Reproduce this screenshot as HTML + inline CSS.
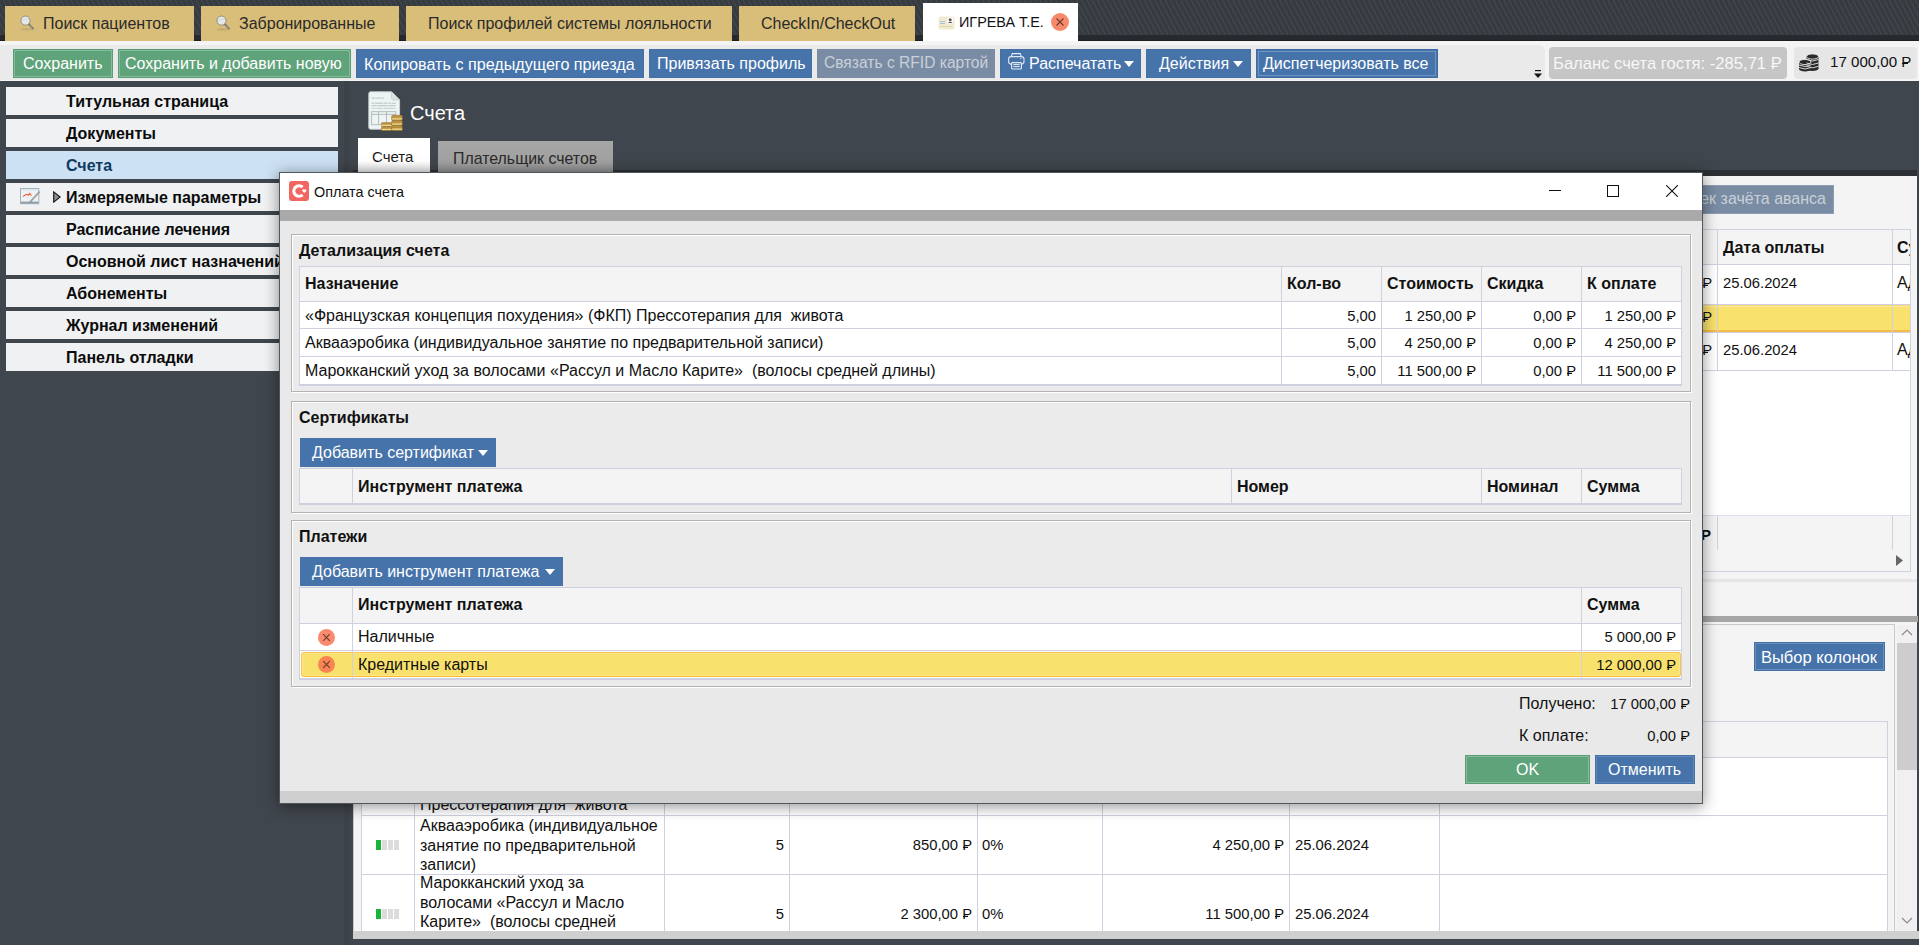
<!DOCTYPE html>
<html><head><meta charset="utf-8">
<style>
*{box-sizing:border-box;margin:0;padding:0}
html,body{width:1919px;height:945px;overflow:hidden}
body{background:#40464d;font-family:"Liberation Sans",sans-serif;font-size:16px;color:#111;position:relative}
.a{position:absolute}
.t{position:absolute;white-space:pre;line-height:1}
.r{position:relative;display:inline-block}
.r::after{content:"";position:absolute;left:0.03em;width:0.4em;top:0.6em;height:0.08em;min-height:1px;background:currentColor}
/* top bar */
#topbar{left:0;top:0;width:1919px;height:41px;background:repeating-linear-gradient(62deg,#363b40 0 2.9px,#43484f 3.5px 4px,#363b40 4.6px)}
#topbar .bot{left:0;top:35px;width:1919px;height:6px;background:#262a2e;border-bottom:1px solid #1c1f22}
.tab{position:absolute;top:6px;height:35px;background:#d9be79;color:#2a2a2a}
.mag{position:absolute;width:16px;height:16px;overflow:visible}
/* toolbar */
#toolbar{left:0;top:41px;width:1919px;height:40px;background:#f4f4f4}
.btn{position:absolute;top:49px;height:29px;color:#fff;font-size:16px}
.g{background:#5fa37b;border:1px solid #5a9c74;box-shadow:inset 0 0 0 1px #86bb9b}
.b{background:#4673aa;border:1px solid #4470a6}
.dis{background:#7a8ca3;color:#c9d0da}
/* nav */
.nav{position:absolute;left:6px;width:332px;height:28px;background:#f0f1f3;font-weight:700;font-size:16px;color:#0b0b0b}
.nav.sel{background:#cce1f4;color:#0f3a60}

.grp{border:1px solid #b3b3b3;box-shadow:inset 1px 1px 0 #fff, 1px 1px 0 #fff;background:#ebebeb}
.hl{left:300px;width:1381px;height:1px;background:#cfd1e0}
.vl{width:1px;background:#cfd1e0}
.hd{font-weight:700;font-size:16px}
</style></head><body>

<!-- TOP TAB BAR -->
<div class="a" id="topbar"><div class="a bot"></div>
  <div class="tab" style="left:5px;width:189px">
    <svg class="mag" style="left:15px;top:10px" viewBox="0 0 16 16"><ellipse cx="6.5" cy="13.3" rx="6" ry="1.2" fill="#b9a06a" opacity="0.6"/><path d="M8.9 8.3L13 12.6" stroke="#7c776c" stroke-width="2" stroke-linecap="round"/><path d="M9.3 8.9L12.7 12.3" stroke="#c9c9c9" stroke-width="0.7" stroke-dasharray="0.8 0.6"/><circle cx="5.5" cy="4.6" r="4.6" fill="#e4e9e8" stroke="#8a8576" stroke-width="0.9"/><path d="M2.2 4.4Q5 2.6 8.8 3.3" stroke="#c5d2d6" stroke-width="0.8" fill="none"/></svg>
    <span class="t" style="left:38px;top:10px;font-size:16px">Поиск пациентов</span></div>
  <div class="tab" style="left:201px;width:198px">
    <svg class="mag" style="left:15px;top:10px" viewBox="0 0 16 16"><ellipse cx="6.5" cy="13.3" rx="6" ry="1.2" fill="#b9a06a" opacity="0.6"/><path d="M8.9 8.3L13 12.6" stroke="#7c776c" stroke-width="2" stroke-linecap="round"/><path d="M9.3 8.9L12.7 12.3" stroke="#c9c9c9" stroke-width="0.7" stroke-dasharray="0.8 0.6"/><circle cx="5.5" cy="4.6" r="4.6" fill="#e4e9e8" stroke="#8a8576" stroke-width="0.9"/><path d="M2.2 4.4Q5 2.6 8.8 3.3" stroke="#c5d2d6" stroke-width="0.8" fill="none"/></svg>
    <span class="t" style="left:38px;top:10px;font-size:16px">Забронированные</span></div>
  <div class="tab" style="left:406px;width:326px">
    <span class="t" style="left:22px;top:10px;font-size:16px">Поиск профилей системы лояльности</span></div>
  <div class="tab" style="left:739px;width:176px">
    <span class="t" style="left:22px;top:10px;font-size:16px">CheckIn/CheckOut</span></div>
  <div class="a" style="left:923px;top:3px;width:155px;height:38px;background:#fff">
    <svg class="a" style="left:15px;top:13px" width="17" height="14" viewBox="0 0 17 14"><rect x="0.5" y="0.5" width="16" height="13" rx="2" fill="#f3ead2"/><rect x="2" y="5" width="5" height="1" fill="#9ec3d6"/><rect x="2" y="7" width="5" height="1" fill="#9ec3d6"/><rect x="2" y="10" width="12" height="1" fill="#e0d3b0"/><rect x="9.5" y="1.5" width="5.5" height="6" fill="#fff"/><circle cx="12.2" cy="3.8" r="1.5" fill="#555"/><path d="M10 7 Q12.2 4.5 14.5 7Z" fill="#555"/></svg>
    <span class="t" style="left:36px;top:12px;font-size:14.4px;color:#111">ИГРЕВА Т.Е.</span>
    <svg class="a" style="left:128px;top:10px" width="18" height="18" viewBox="0 0 18 18"><circle cx="9" cy="9" r="9" fill="#f9896b"/><path d="M5.5 5.5L12.5 12.5M12.5 5.5L5.5 12.5" stroke="#6b3b30" stroke-width="1.1"/></svg>
  </div>
</div>

<!-- TOOLBAR -->
<div class="a" id="toolbar"></div>
<div class="a" style="left:0;top:45px;width:1545px;height:35px;background:#eaeaea;border-top-right-radius:6px"></div>
<div class="btn g" style="left:13px;width:100px"><span class="t" style="left:9px;top:6px">Сохранить</span></div>
<div class="btn g" style="left:118px;width:233px"><span class="t" style="left:6px;top:6px">Сохранить и добавить новую</span></div>
<div class="btn b" style="left:356px;width:288px"><span class="t" style="left:7px;top:6px;font-size:16.15px">Копировать с предыдущего приезда</span></div>
<div class="btn b" style="left:649px;width:163px"><span class="t" style="left:7px;top:6px">Привязать профиль</span></div>
<div class="btn dis" style="left:817px;width:178px"><span class="t" style="left:7px;top:6px;font-size:15.6px">Связать с RFID картой</span></div>
<div class="btn b" style="left:1000px;width:141px">
  <svg class="a" style="left:7px;top:3px" width="17" height="17" viewBox="0 0 17 17"><path d="M3.3 3.6L4.3 0.6H12.3L13.3 3.6" fill="none" stroke="#e8edf5" stroke-width="1.1"/><rect x="0.6" y="3.6" width="15.4" height="7.6" rx="2.6" fill="none" stroke="#dde5ef" stroke-width="1.1"/><rect x="3.6" y="9.6" width="9.8" height="6.4" rx="0.8" fill="#4673aa" stroke="#e8edf5" stroke-width="1.1"/><path d="M5.3 11.6h6.4M5.3 13.6h6.4" stroke="#e8edf5" stroke-width="1"/><circle cx="13" cy="5.6" r="0.6" fill="#e8edf5"/></svg>
  <span class="t" style="left:28px;top:6px">Распечатать</span>
  <svg class="a" style="left:123px;top:11px" width="10" height="6" viewBox="0 0 10 6"><path d="M0 0H10L5 6Z" fill="#fff"/></svg></div>
<div class="btn b" style="left:1146px;width:105px"><span class="t" style="left:12px;top:6px">Действия</span>
  <svg class="a" style="left:86px;top:11px" width="10" height="6" viewBox="0 0 10 6"><path d="M0 0H10L5 6Z" fill="#fff"/></svg></div>
<div class="btn b" style="left:1256px;width:182px;border-color:#3e6ba4;box-shadow:inset 0 0 0 1px #4875ad,inset 0 0 0 2px #6e94c2"><span class="t" style="left:6px;top:6px">Диспетчеризовать все</span></div>
<svg class="a" style="left:1534px;top:70px" width="8" height="8" viewBox="0 0 8 8"><rect x="1" y="0" width="6" height="1.2" fill="#111"/><path d="M0 3.5H8L4 8Z" fill="#111"/></svg>
<div class="a" style="left:1549px;top:47px;width:238px;height:32px;background:#c6c6c6;border-radius:4px"><span class="t" style="left:4px;top:9px;font-size:16.6px;color:#f7f7f7">Баланс счета гостя: -285,71 <span class="r">Р</span></span></div>
<div class="a" style="left:1794px;top:47px;width:123px;height:32px;background:#e6e6e6;border-radius:4px">
  <svg class="a" style="left:4px;top:6px" width="22" height="20" viewBox="0 0 22 20"><g fill="#2b2b2b"><ellipse cx="14.5" cy="3.5" rx="6" ry="2.6"/><rect x="8.5" y="3.5" width="12" height="12"/><ellipse cx="14.5" cy="15.5" rx="6" ry="2.6"/><ellipse cx="7" cy="9" rx="6" ry="2.6"/><rect x="1" y="9" width="12" height="7"/><ellipse cx="7" cy="16" rx="6" ry="2.6"/></g><g stroke="#e6e6e6" stroke-width="0.9" fill="none"><path d="M8.5 6.5Q14.5 9.5 20.5 6.5M8.5 10Q14.5 13 20.5 10M8.5 13.3Q14.5 16.3 20.5 13.3M1 12Q7 15 13 12M1 14.5Q7 17.5 13 14.5"/><ellipse cx="14.5" cy="3.5" rx="6" ry="2.6"/><ellipse cx="7" cy="9" rx="6" ry="2.6"/></g></svg>
  <span class="t" style="left:36px;top:7px;font-size:15.1px;color:#111">17 000,00 <span class="r">Р</span></span></div>

<!-- LEFT NAV -->
<div class="nav" style="top:87px"><span class="t" style="left:60px;top:7px">Титульная страница</span></div>
<div class="nav" style="top:119px"><span class="t" style="left:60px;top:7px">Документы</span></div>
<div class="nav sel" style="top:151px"><span class="t" style="left:60px;top:7px">Счета</span></div>
<div class="nav" style="top:183px">
  <svg class="a" style="left:14px;top:5px" width="21" height="17" viewBox="0 0 21 17"><rect x="0.5" y="0.5" width="18.3" height="15.2" fill="#eef2f4" stroke="#a3b3bb"/><rect x="1" y="1" width="17.3" height="1.4" fill="#d7e6ee"/><rect x="1" y="13.6" width="17.3" height="2" fill="#8fa0a9"/><path d="M3 8.6L4.8 7.2L6.6 6.3L8.2 7.2L9.8 5.4L11.4 7.8" stroke="#f2603f" stroke-width="1.1" fill="none"/><path d="M9.8 14.2L19.6 3.6" stroke="#8d9aa1" stroke-width="1.7"/><path d="M10.2 13.2L18.8 3.9" stroke="#e8b8b8" stroke-width="0.6"/></svg>
  <svg class="a" style="left:47px;top:8px" width="8" height="12" viewBox="0 0 8 12"><path d="M0.7 0.9L7.2 6L0.7 11.1Z" fill="#8c8c8c" stroke="#111" stroke-width="1.1" stroke-linejoin="miter"/></svg>
  <span class="t" style="left:60px;top:7px">Измеряемые параметры</span></div>
<div class="nav" style="top:215px"><span class="t" style="left:60px;top:7px">Расписание лечения</span></div>
<div class="nav" style="top:247px"><span class="t" style="left:60px;top:7px">Основной лист назначений</span></div>
<div class="nav" style="top:279px"><span class="t" style="left:60px;top:7px">Абонементы</span></div>
<div class="nav" style="top:311px"><span class="t" style="left:60px;top:7px">Журнал изменений</span></div>
<div class="nav" style="top:343px"><span class="t" style="left:60px;top:7px">Панель отладки</span></div>


<!-- CONTENT -->
<div class="a" style="left:344px;top:81px;width:6px;height:864px;background:#3d4248"></div>
<svg class="a" style="left:367px;top:91px" width="36" height="40" viewBox="0 0 36 40">
  <defs><linearGradient id="cg" x1="0" y1="0" x2="0" y2="1"><stop offset="0" stop-color="#c79f4b"/><stop offset="0.35" stop-color="#b48a3a"/><stop offset="0.7" stop-color="#f1d98c"/><stop offset="1" stop-color="#a37c33"/></linearGradient></defs>
  <path d="M3.5 0.8H24.5L32.6 8.9V36.6Q32.6 38.2 31 38.2H3.5Q1.8 38.2 1.8 36.6V2.5Q1.8 0.8 3.5 0.8Z" fill="#eef3f3" stroke="#cdd6d6" stroke-width="0.9"/>
  <path d="M24.5 0.8V7.2Q24.5 9 26.3 9H32.6Z" fill="#dbe4e4" stroke="#c2cccc" stroke-width="0.7"/>
  <g fill="#b9c0c0"><rect x="4.6" y="6.6" width="4" height="1"/><rect x="9.2" y="6.6" width="4.5" height="1"/><rect x="14.3" y="6.6" width="2.5" height="1"/>
  <rect x="4.6" y="11.7" width="2.5" height="1"/><rect x="7.8" y="11.7" width="8" height="1"/><rect x="16.5" y="11.7" width="4" height="1"/><rect x="21.3" y="11.7" width="3" height="1"/><rect x="25.2" y="11.7" width="3.5" height="1"/>
  <rect x="4.6" y="14.2" width="5" height="1"/><rect x="10.3" y="14.2" width="11" height="1"/><rect x="22" y="14.2" width="6.7" height="1"/>
  <rect x="4.6" y="16.8" width="4" height="1" opacity="0.7"/><rect x="9.3" y="16.8" width="7" height="1" opacity="0.7"/><rect x="17" y="16.8" width="11.5" height="1" opacity="0.7"/></g>
  <g fill="none" stroke="#aeb7b7" stroke-width="0.9"><rect x="4.6" y="20.7" width="24.2" height="13"/><path d="M4.6 23.4H28.8M11.6 20.7V33.7M19.5 20.7V33.7"/></g>
  <g stroke="#8e6a28" stroke-width="0.5" fill="url(#cg)"><rect x="24.6" y="24.3" width="10.7" height="5.2" rx="1.2"/><rect x="24.6" y="29.5" width="10.7" height="5.2" rx="1.2"/><rect x="24.6" y="34.7" width="10.7" height="5.1" rx="1.2"/><rect x="14.4" y="31.6" width="10.2" height="4.1" rx="1.1"/><rect x="14.4" y="35.7" width="10.2" height="4.1" rx="1.1"/></g>
</svg>
<span class="t" style="left:410px;top:102.5px;font-size:20px;color:#fff">Счета</span>
<div class="a" style="left:353px;top:170px;width:1564px;height:6px;background:#2c3035"></div>
<div class="a" style="left:358px;top:138px;width:72px;height:34px;background:linear-gradient(#fff 0,#fff 70%,#e4e4e4 100%)"><span class="t" style="left:14px;top:11px;font-size:15px;color:#1a1a1a">Счета</span></div>
<div class="a" style="left:438px;top:141px;width:175px;height:31px;background:linear-gradient(#a6a6a6 0,#a0a0a0 70%,#8c8c8c 100%)"><span class="t" style="left:15px;top:10px;font-size:15.9px;color:#2a2a2a">Плательщик счетов</span></div>
<div class="a" style="left:353px;top:176px;width:1564px;height:755px;background:#f4f4f4"></div>
<div class="a" style="left:353px;top:931px;width:1566px;height:8px;background:#cfcfcf"></div>

<!-- upper panel right visible part -->
<div class="btn dis" style="left:1560px;top:185px;width:274px;height:29px;box-shadow:inset 0 0 0 1px #8c9db3"><span class="t" style="right:8px;top:6px">Чек зачёта аванса</span></div>
<div class="a" style="left:1560px;top:229px;width:351px;height:343px;background:#fff;border:1px solid #cfd1e0;overflow:hidden">
 <div class="a" style="left:0;top:0;width:349px;height:35px;background:#f4f4f4;border-bottom:1px solid #cfd1e0"></div>
 <span class="t" style="left:162px;top:10px;font-weight:700;font-size:16px">Дата оплаты</span>
 <span class="t" style="left:336px;top:10px;font-weight:700;font-size:16px">Сумма</span>
 <div class="a" style="left:0;top:74px;width:349px;height:1px;background:#cfd1e0"></div>
 <div class="a" style="left:0;top:75px;width:349px;height:27px;background:#f9e16d;border-top:1px solid #fbd77a;border-bottom:2px solid #f5bd45;box-shadow:inset 0 1px 0 #fde9a0"></div>
 <div class="a" style="left:0;top:102px;width:349px;height:1px;background:#cfd1e0"></div>
 <div class="a" style="left:0;top:140px;width:349px;height:1px;background:#cfd1e0"></div>
 <div class="a" style="left:156px;top:0;width:1px;height:141px;background:#cfd1e0"></div>
 <div class="a" style="left:331px;top:0;width:1px;height:141px;background:#cfd1e0"></div>
 <span class="t" style="right:198px;top:46px;font-size:14.8px">250,00 <span class="r">Р</span></span>
 <span class="t" style="right:198px;top:80px;font-size:14.8px">250,00 <span class="r">Р</span></span>
 <span class="t" style="right:198px;top:113px;font-size:14.8px">250,00 <span class="r">Р</span></span>
 <span class="t" style="left:162px;top:46px;font-size:14.8px">25.06.2024</span>
 <span class="t" style="left:162px;top:113px;font-size:14.8px">25.06.2024</span>
 <span class="t" style="left:336px;top:45px;font-size:16px">Ад</span>
 <span class="t" style="left:336px;top:112px;font-size:16px">Ад</span>
 <div class="a" style="left:0;top:285px;width:349px;height:56px;background:#f4f4f4;border-top:1px solid #dcdde8"></div>
 <div class="a" style="left:156px;top:286px;width:1px;height:34px;background:#cfd1e0"></div>
 <div class="a" style="left:331px;top:286px;width:1px;height:34px;background:#cfd1e0"></div>
 <span class="t" style="right:199px;top:297px;font-size:15px;font-weight:700">17 000,00 <span class="r">Р</span></span>
 <svg class="a" style="left:335px;top:325px" width="7" height="11" viewBox="0 0 7 11"><path d="M0 0L7 5.5L0 11Z" fill="#666"/></svg>
</div>
<div class="a" style="left:353px;top:579px;width:1564px;height:3px;background:#e6e6e6"></div>
<div class="a" style="left:353px;top:616px;width:1565px;height:6px;background:#a6a6a6"></div>

<!-- lower panel -->
<div class="a" style="left:353px;top:624px;width:1542px;height:307px;border:1px solid #c9c9c9;border-bottom:none;background:#f4f4f4"></div>
<div class="btn b" style="left:1754px;top:642px;width:131px;box-shadow:inset 0 0 0 1px #6a8fbf"><span class="t" style="left:6px;top:6px;font-size:16.5px">Выбор колонок</span></div>
<div class="a" style="left:1897px;top:625px;width:20px;height:306px;background:#f0f0f0"></div>
<div class="a" style="left:1897px;top:643px;width:20px;height:127px;background:#cdcdcd"></div>
<svg class="a" style="left:1901px;top:628px" width="12" height="8" viewBox="0 0 12 8"><path d="M1 7L6 2L11 7" stroke="#8a8a8a" stroke-width="1.2" fill="none"/></svg>
<svg class="a" style="left:1901px;top:917px" width="12" height="8" viewBox="0 0 12 8"><path d="M1 1L6 6L11 1" stroke="#8a8a8a" stroke-width="1.2" fill="none"/></svg>
<div class="a" style="left:361px;top:721px;width:1527px;height:210px;background:#fff;border:1px solid #cfd1e0;border-bottom:none"></div>
<div class="a" style="left:362px;top:722px;width:1525px;height:36px;background:#f4f4f4;border-bottom:1px solid #cfd1e0"></div>
<div class="a" style="left:362px;top:815px;width:1525px;height:1px;background:#cfd1e0"></div>
<div class="a" style="left:362px;top:874px;width:1525px;height:1px;background:#cfd1e0"></div>
<div class="a" style="left:414px;top:722px;width:1px;height:209px;background:#cfd1e0"></div>
<div class="a" style="left:664px;top:722px;width:1px;height:209px;background:#cfd1e0"></div>
<div class="a" style="left:789px;top:722px;width:1px;height:209px;background:#cfd1e0"></div>
<div class="a" style="left:977px;top:722px;width:1px;height:209px;background:#cfd1e0"></div>
<div class="a" style="left:1102px;top:722px;width:1px;height:209px;background:#cfd1e0"></div>
<div class="a" style="left:1289px;top:722px;width:1px;height:209px;background:#cfd1e0"></div>
<div class="a" style="left:1439px;top:722px;width:1px;height:209px;background:#cfd1e0"></div>
<div class="a" style="left:420px;top:757px;width:240px;height:58px;overflow:hidden;font-size:16px;line-height:19.5px;color:#111"><div class="a" style="left:0;top:-1px;width:240px;white-space:pre-wrap">«Французская концепция похудения» (ФКП) Прессотерапия для  живота</div></div>
<div class="a" style="left:420px;top:816px;width:240px;height:58px;font-size:16px;line-height:19.5px;color:#111"><div class="a" style="left:0;top:0;white-space:pre">Аквааэробика (индивидуальное
занятие по предварительной
записи)</div></div>
<div class="a" style="left:420px;top:875px;width:240px;height:56px;overflow:hidden;font-size:16px;line-height:19.5px;color:#111"><div class="a" style="left:0;top:-2px;white-space:pre">Марокканский уход за
волосами «Рассул и Масло
Карите»  (волосы средней
длины)</div></div>
<span class="t" style="right:1135px;top:838px;font-size:14.8px">5</span>
<span class="t" style="right:947px;top:838px;font-size:14.8px">850,00 <span class="r">Р</span></span>
<span class="t" style="left:982px;top:838px;font-size:14.8px">0%</span>
<span class="t" style="right:635px;top:838px;font-size:14.8px">4 250,00 <span class="r">Р</span></span>
<span class="t" style="left:1295px;top:838px;font-size:14.8px">25.06.2024</span>
<span class="t" style="right:1135px;top:907px;font-size:14.8px">5</span>
<span class="t" style="right:947px;top:907px;font-size:14.8px">2 300,00 <span class="r">Р</span></span>
<span class="t" style="left:982px;top:907px;font-size:14.8px">0%</span>
<span class="t" style="right:635px;top:907px;font-size:14.8px">11 500,00 <span class="r">Р</span></span>
<span class="t" style="left:1295px;top:907px;font-size:14.8px">25.06.2024</span>
<svg class="a" style="left:376px;top:840px" width="24" height="10" viewBox="0 0 24 10"><rect x="0" y="0" width="5" height="10" fill="#1bb43a"/><rect x="6" y="0" width="5" height="10" fill="#dcdcdc"/><rect x="12" y="0" width="5" height="10" fill="#dcdcdc"/><rect x="18" y="0" width="5" height="10" fill="#dcdcdc"/></svg>
<svg class="a" style="left:376px;top:909px" width="24" height="10" viewBox="0 0 24 10"><rect x="0" y="0" width="5" height="10" fill="#1bb43a"/><rect x="6" y="0" width="5" height="10" fill="#dcdcdc"/><rect x="12" y="0" width="5" height="10" fill="#dcdcdc"/><rect x="18" y="0" width="5" height="10" fill="#dcdcdc"/></svg>



<!-- DIALOG -->
<div class="a" id="dlg" style="left:279px;top:172px;width:1424px;height:632px;background:#e9e9e9;border:1px solid #4e565e;box-shadow:0 2px 14px rgba(0,0,0,0.45)">
</div>
<div class="a" style="left:280px;top:173px;width:1422px;height:37px;background:#fff"></div>
<svg class="a" style="left:289px;top:181px" width="20" height="20" viewBox="0 0 20 20"><rect x="0" y="0" width="20" height="20" rx="3" fill="#f26661"/><path d="M13.6 6.2A5.2 5.2 0 1 0 13.6 13.8" stroke="#fff" stroke-width="3.2" fill="none"/><path d="M13 9.3q1-1.6 2.3-0.6q1.3-1 2.3 0.6q-0.5 1.3-2.3 2.6q-1.8-1.3-2.3-2.6z" fill="#fff"/></svg>
<span class="t" style="left:314px;top:185px;font-size:14.4px;color:#111">Оплата счета</span>
<div class="a" style="left:1549px;top:190px;width:12px;height:1px;background:#111"></div>
<div class="a" style="left:1607px;top:185px;width:12px;height:12px;border:1px solid #111"></div>
<svg class="a" style="left:1666px;top:185px" width="12" height="12" viewBox="0 0 12 12"><path d="M0 0L12 12M12 0L0 12" stroke="#111" stroke-width="1.1"/></svg>
<div class="a" style="left:280px;top:210px;width:1422px;height:11px;background:#a9a9a9"></div>
<div class="a" style="left:280px;top:791px;width:1422px;height:12px;background:#cfcfcf"></div>

<!-- group 1 -->
<div class="a grp" style="left:291px;top:234px;width:1400px;height:158px"></div>
<span class="t" style="left:299px;top:243px;font-weight:700;font-size:16px">Детализация счета</span>
<div class="a" style="left:299px;top:266px;width:1383px;height:120px;background:#fff;border:1px solid #cfd1e0;border-bottom-width:2px"></div>
<div class="a" style="left:300px;top:267px;width:1381px;height:35px;background:#f4f4f4;border-bottom:1px solid #cfd1e0"></div>
<div class="a hl" style="top:328px"></div>
<div class="a hl" style="top:356px"></div>
<div class="a vl" style="left:1281px;top:267px;height:118px"></div>
<div class="a vl" style="left:1381px;top:267px;height:118px"></div>
<div class="a vl" style="left:1481px;top:267px;height:118px"></div>
<div class="a vl" style="left:1581px;top:267px;height:118px"></div>
<span class="t hd" style="left:305px;top:276px">Назначение</span>
<span class="t hd" style="left:1287px;top:276px">Кол-во</span>
<span class="t hd" style="left:1387px;top:276px">Стоимость</span>
<span class="t hd" style="left:1487px;top:276px">Скидка</span>
<span class="t hd" style="left:1587px;top:276px">К оплате</span>
<span class="t" style="left:305px;top:308px">«Французская концепция похудения» (ФКП) Прессотерапия для  живота</span>
<span class="t" style="left:305px;top:335px">Аквааэробика (индивидуальное занятие по предварительной записи)</span>
<span class="t" style="left:305px;top:363px">Марокканский уход за волосами «Рассул и Масло Карите»  (волосы средней длины)</span>
<span class="t" style="right:543px;top:309px;font-size:14.8px">5,00</span>
<span class="t" style="right:543px;top:336px;font-size:14.8px">5,00</span>
<span class="t" style="right:543px;top:364px;font-size:14.8px">5,00</span>
<span class="t" style="right:443px;top:309px;font-size:14.8px">1 250,00 <span class="r">Р</span></span>
<span class="t" style="right:443px;top:336px;font-size:14.8px">4 250,00 <span class="r">Р</span></span>
<span class="t" style="right:443px;top:364px;font-size:14.8px">11 500,00 <span class="r">Р</span></span>
<span class="t" style="right:343px;top:309px;font-size:14.8px">0,00 <span class="r">Р</span></span>
<span class="t" style="right:343px;top:336px;font-size:14.8px">0,00 <span class="r">Р</span></span>
<span class="t" style="right:343px;top:364px;font-size:14.8px">0,00 <span class="r">Р</span></span>
<span class="t" style="right:243px;top:309px;font-size:14.8px">1 250,00 <span class="r">Р</span></span>
<span class="t" style="right:243px;top:336px;font-size:14.8px">4 250,00 <span class="r">Р</span></span>
<span class="t" style="right:243px;top:364px;font-size:14.8px">11 500,00 <span class="r">Р</span></span>

<!-- group 2 -->
<div class="a grp" style="left:291px;top:401px;width:1400px;height:112px"></div>
<span class="t" style="left:299px;top:410px;font-weight:700;font-size:16px">Сертификаты</span>
<div class="btn b" style="left:300px;top:438px;width:196px;border:none"><span class="t" style="left:12px;top:7px">Добавить сертификат</span>
  <svg class="a" style="left:178px;top:12px" width="10" height="6" viewBox="0 0 10 6"><path d="M0 0H10L5 6Z" fill="#fff"/></svg></div>
<div class="a" style="left:299px;top:468px;width:1383px;height:37px;background:#f4f4f4;border:1px solid #cfd1e0;border-bottom-width:2px"></div>
<div class="a vl" style="left:352px;top:469px;height:34px"></div>
<div class="a vl" style="left:1231px;top:469px;height:34px"></div>
<div class="a vl" style="left:1481px;top:469px;height:34px"></div>
<div class="a vl" style="left:1581px;top:469px;height:34px"></div>
<span class="t hd" style="left:358px;top:479px">Инструмент платежа</span>
<span class="t hd" style="left:1237px;top:479px">Номер</span>
<span class="t hd" style="left:1487px;top:479px">Номинал</span>
<span class="t hd" style="left:1587px;top:479px">Сумма</span>

<!-- group 3 -->
<div class="a grp" style="left:291px;top:520px;width:1400px;height:167px"></div>
<span class="t" style="left:299px;top:529px;font-weight:700;font-size:16px">Платежи</span>
<div class="btn b" style="left:300px;top:557px;width:263px;border:none"><span class="t" style="left:12px;top:7px">Добавить инструмент платежа</span>
  <svg class="a" style="left:245px;top:12px" width="10" height="6" viewBox="0 0 10 6"><path d="M0 0H10L5 6Z" fill="#fff"/></svg></div>
<div class="a" style="left:299px;top:587px;width:1383px;height:93px;background:#fff;border:1px solid #cfd1e0;border-bottom-width:2px"></div>
<div class="a" style="left:300px;top:588px;width:1381px;height:36px;background:#f4f4f4;border-bottom:1px solid #cfd1e0"></div>
<div class="a" style="left:300px;top:650px;width:1381px;height:1px;background:#cfd1e0"></div>
<div class="a" style="left:301px;top:652px;width:1380px;height:25px;background:#f9e16d;border:1px solid #f8c550;border-bottom-color:#f7bb2a;border-radius:3px;box-shadow:inset 0 0 0 1px #fbe68a"></div>
<div class="a vl" style="left:352px;top:588px;height:90px"></div>
<div class="a vl" style="left:1581px;top:588px;height:90px"></div>
<span class="t hd" style="left:358px;top:597px">Инструмент платежа</span>
<span class="t hd" style="left:1587px;top:597px">Сумма</span>
<svg class="a" style="left:318px;top:629px" width="17" height="17" viewBox="0 0 17 17"><circle cx="8.5" cy="8.5" r="8.5" fill="#f98a6e"/><path d="M5.2 5.2L11.8 11.8M11.8 5.2L5.2 11.8" stroke="#6b3b30" stroke-width="1.1"/></svg>
<svg class="a" style="left:318px;top:656px" width="17" height="17" viewBox="0 0 17 17"><circle cx="8.5" cy="8.5" r="8.5" fill="#f98552"/><path d="M5.2 5.2L11.8 11.8M11.8 5.2L5.2 11.8" stroke="#6b3b30" stroke-width="1.1"/></svg>
<span class="t" style="left:358px;top:629px">Наличные</span>
<span class="t" style="left:358px;top:657px">Кредитные карты</span>
<span class="t" style="right:243px;top:630px;font-size:14.8px">5 000,00 <span class="r">Р</span></span>
<span class="t" style="right:243px;top:658px;font-size:14.8px">12 000,00 <span class="r">Р</span></span>

<span class="t" style="left:1519px;top:696px">Получено:</span>
<span class="t" style="right:229px;top:697px;font-size:14.8px">17 000,00 <span class="r">Р</span></span>
<span class="t" style="left:1519px;top:728px">К оплате:</span>
<span class="t" style="right:229px;top:729px;font-size:14.8px">0,00 <span class="r">Р</span></span>
<div class="btn g" style="left:1465px;top:755px;width:125px"><span class="t" style="left:0;width:123px;text-align:center;top:6px">OK</span></div>
<div class="btn b" style="left:1595px;top:755px;width:100px;box-shadow:inset 0 0 0 1px #5f87bb"><span class="t" style="left:12px;top:6px">Отменить</span></div>


</body></html>
